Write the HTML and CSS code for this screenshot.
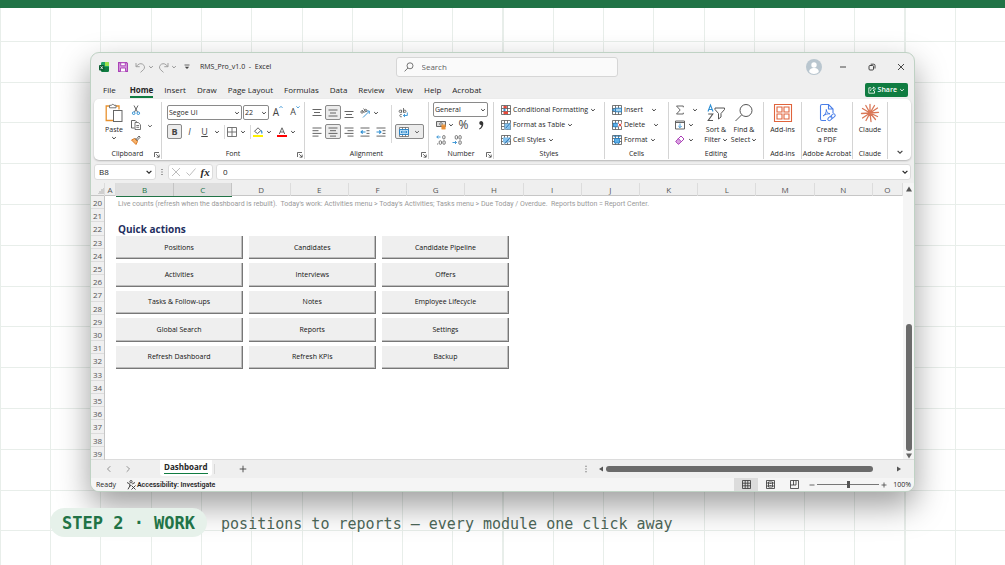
FILE: index.html
```html
<!DOCTYPE html>
<html lang="en">
<head>
    <meta charset="UTF-8">
    <meta name="viewport" content="width=device-width, initial-scale=1.0">
    <title>RMS Pro</title>
    <link rel="stylesheet" href="styles.css">
</head>
<body>
    <!-- shared icons -->
    <svg class="sprite" aria-hidden="true">
        <symbol id="chev" viewBox="0 0 6 6"><path d="M1.2 2.1 3 3.9 4.8 2.1" fill="none" stroke="currentColor" stroke-width="0.9"/></symbol>
        <symbol id="launch" viewBox="0 0 6 6"><path d="M.5 5V.5H5M2.2 2.2 5 5M5.2 2.6V5.2H2.6" fill="none" stroke="#444" stroke-width=".8"/></symbol>
        <symbol id="grid-base" viewBox="0 0 10 10"><path d="M.5.5h9v9h-9zM.5 3.5h9M.5 6.5h9M3.5.5v9M6.5.5v9" fill="#fff" stroke="#555" stroke-width=".8"/></symbol>
    </svg>

    <div class="top-strip"></div>

    <main class="window">
        <header class="titlebar">
            <svg class="i10" viewBox="0 0 10 10"><rect x="2" y="0" width="8" height="10" rx="1.4" fill="#21a366"/><path d="M6 0h2.6A1.4 1.4 0 0 1 10 1.4V4H6z" fill="#9be04b"/><path d="M2 5h8v3.6A1.4 1.4 0 0 1 8.600 10H3.400A1.400 1.400 0 0 1 2 8.600z" fill="#107c41"/><rect y="3" width="5.400" height="5.400" rx="1" fill="#0b5a30"/><path d="m1.600 4.300 2.200 2.800m0-2.800L1.600 7.100" stroke="#fff" stroke-width=".8"/></svg>
            <button class="tb save" aria-label="Save"><svg class="i10" viewBox="0 0 10 10"><path d="M.6.6h8l.8.8v8H.6z" fill="#d9a0e0" stroke="#a83db5" stroke-width="1.1"/><path d="M2.700.8h4.600v3H2.700zM2.500 9.400V6h5v3.400" fill="#fff" stroke="#a83db5" stroke-width=".9"/></svg></button>
            <button class="tb" aria-label="Undo"><svg class="i11" viewBox="0 0 11 11"><path d="M1 1v3.700h3.700M1.200 4.500C3 2 5.500 1 7.600 2.200c2.200 1.300 2.500 3.800 1 5.300L5.500 10.400" fill="none" stroke="#999" stroke-width=".9"/></svg><svg class="i6 dim"><use href="#chev"/></svg></button>
            <button class="tb" aria-label="Redo"><svg class="i11" viewBox="0 0 11 11"><path d="M10 1v3.700H6.300M9.800 4.500C8 2 5.500 1 3.400 2.200 1.200 3.500.9 6 2.400 7.500l3.100 2.900" fill="none" stroke="#999" stroke-width=".9"/></svg><svg class="i6 dim"><use href="#chev"/></svg></button>
            <button class="tb" aria-label="Customize"><svg class="i6" viewBox="0 0 6 6"><path d="M.5 1h5" stroke="#444" stroke-width=".8"/><path d="M.8 2.800h4.400L3 5z" fill="#444"/></svg></button>
            <span class="doc-name">RMS_Pro_v1.0&nbsp; -&nbsp; Excel</span>
            <label class="search">
                <svg class="i10" viewBox="0 0 10 10"><circle cx="6" cy="3.800" r="3" fill="none" stroke="#555" stroke-width=".8"/><path d="M3.900 6 .6 9.400" stroke="#555" stroke-width=".8"/></svg>
                <input type="text" placeholder="Search" aria-label="Search">
            </label>
            <div class="win-controls">
                <svg class="avatar" viewBox="0 0 16 16"><circle cx="8" cy="8" r="8" fill="#b9c6cf"/><circle cx="8" cy="6" r="2.700" fill="#fff"/><path d="M3.200 13c0-3 2-4 4.800-4s4.800 1 4.800 4c-2.500 2.500-7.100 2.500-9.600 0z" fill="#fff"/></svg>
                <button aria-label="Minimize"><svg class="i8" viewBox="0 0 8 8"><path d="M1 4h6" stroke="#333" stroke-width=".9"/></svg></button>
                <button aria-label="Restore"><svg class="i8" viewBox="0 0 8 8"><rect x="1" y="2.500" width="4.500" height="4.500" rx="1" fill="none" stroke="#333" stroke-width=".9"/><path d="M2.700 1.200h3a1.300 1.300 0 0 1 1.300 1.300v3" fill="none" stroke="#333" stroke-width=".9"/></svg></button>
                <button aria-label="Close"><svg class="i8" viewBox="0 0 8 8"><path d="m1 1 6 6m0-6L1 7" stroke="#333" stroke-width=".9"/></svg></button>
            </div>
        </header>

        <nav class="tabs">
            <a href="#">File</a>
            <a href="#" class="active">Home</a>
            <a href="#">Insert</a>
            <a href="#">Draw</a>
            <a href="#">Page Layout</a>
            <a href="#">Formulas</a>
            <a href="#">Data</a>
            <a href="#">Review</a>
            <a href="#">View</a>
            <a href="#">Help</a>
            <a href="#">Acrobat</a>
            <button class="share"><svg class="i8" viewBox="0 0 8 8"><path d="M3 1.800H.8v5.400h5.700V5M2.500 5c.2-2 1.300-2.700 3-2.700V.9l2 2-2 2V3.600" fill="none" stroke="#fff" stroke-width=".8"/></svg>Share<svg class="i6"><use href="#chev"/></svg></button>
        </nav>

        <section class="ribbon">
            <div class="group">
                <div class="body clipboard">
                    <button class="big"><svg class="i20" viewBox="0 0 20 20"><path d="M5.500 3H2.200v14.500H9M12 3h3v3.500" fill="none" stroke="#e8912d" stroke-width="1.300"/><path d="M5.500 4.800V2.300h2a1.300 1.300 0 0 1 2.500 0h2v2.500z" fill="#fff" stroke="#666" stroke-width=".9"/><rect x="9.500" y="7.500" width="8.500" height="11" fill="#fff" stroke="#666"/></svg>Paste<svg class="i6"><use href="#chev"/></svg></button>
                    <div class="stack">
                        <button class="tool" aria-label="Cut"><svg class="i10" viewBox="0 0 10 10"><path d="M3 .5 6.500 7M7 .5 3.500 7" stroke="#555" stroke-width=".9"/><circle cx="2.700" cy="8.200" r="1.300" fill="none" stroke="#2f8fd3"/><circle cx="7.300" cy="8.200" r="1.300" fill="none" stroke="#2f8fd3"/></svg></button>
                        <button class="tool" aria-label="Copy"><svg class="i10" viewBox="0 0 10 10"><path d="M3.500 8H.5V.5h3.700l1.500 1.500" fill="none" stroke="#555" stroke-width=".9"/><path d="M4 2.500h3.300l2.200 2.200v4.800H4zM5.300 5.500h2.800M5.300 7.300h2.800" fill="#fff" stroke="#555" stroke-width=".8"/></svg></button>
                        <button class="tool" aria-label="Format Painter"><svg class="i10" viewBox="0 0 10 10"><path d="m.5 5 3-1.500 3 3L5 9.500z" fill="#f6b26b" stroke="#d9731a" stroke-width=".9"/><path d="M4 3.200 6.800 6M5.500 4 8 1l1.200 1.200L6.500 5" fill="none" stroke="#555" stroke-width=".9"/></svg></button>
                    </div>
                    <button class="tool narrow" aria-label="Copy options"><svg class="i6"><use href="#chev"/></svg></button>
                </div>
                <h2>Clipboard</h2><svg class="launch"><use href="#launch"/></svg>
            </div>

            <div class="group">
                <div class="body font-body">
                    <div class="row tight">
                        <span class="pick font-name"><select aria-label="Font"><option>Segoe UI</option></select><svg class="i6"><use href="#chev"/></svg></span>
                        <span class="pick font-size"><select aria-label="Font size"><option>22</option></select><svg class="i6"><use href="#chev"/></svg></span>
                        <button class="tool grow" aria-label="Grow font">A<svg class="i4" viewBox="0 0 4 4"><path d="M.4 3 2 1.300 3.600 3" fill="none" stroke="#2f8fd3" stroke-width=".8"/></svg></button>
                        <button class="tool grow small" aria-label="Shrink font">A<svg class="i4" viewBox="0 0 4 4"><path d="M.4 1.300 2 3l1.600-1.700" fill="none" stroke="#2f8fd3" stroke-width=".8"/></svg></button>
                    </div>
                    <div class="row font-row">
                        <button class="tool on"><b>B</b></button>
                        <button class="tool"><i>I</i></button>
                        <button class="tool"><u>U</u></button>
                        <svg class="i6"><use href="#chev"/></svg>
                        <span class="bar"></span>
                        <button class="tool slim" aria-label="Borders"><svg class="i10" viewBox="0 0 10 10"><path d="M.5.5h9v9h-9zM.5 5h9M5 .5v9" fill="none" stroke="#666" stroke-width=".9"/></svg></button>
                        <svg class="i6"><use href="#chev"/></svg>
                        <span class="bar"></span>
                        <button class="tool slim" aria-label="Fill colour"><svg class="i10" viewBox="0 0 10 10"><path d="M1.500 4.300 5 .8l2.800 2.800-3.300 3z" fill="none" stroke="#555" stroke-width=".9"/><path d="M7.800 3.600c1.200.8 1.200 2 .8 2.800" fill="none" stroke="#2f8fd3" stroke-width="1.200"/><path d="M0 8h10v2H0z" fill="#fff200"/></svg></button>
                        <svg class="i6"><use href="#chev"/></svg>
                        <button class="tool slim" aria-label="Font colour"><svg class="i10" viewBox="0 0 10 10"><path d="M2.300 7 5 .8 7.700 7M3.200 5h3.600" fill="none" stroke="#555" stroke-width=".9"/><path d="M0 8h10v2H0z" fill="#f00"/></svg></button>
                        <svg class="i6"><use href="#chev"/></svg>
                    </div>
                </div>
                <h2>Font</h2><svg class="launch"><use href="#launch"/></svg>
            </div>

            <div class="group">
                <div class="body align-body">
                    <div class="align-rows">
                        <div class="row">
                            <button class="tool" aria-label="Top align"><svg class="i10" viewBox="0 0 10 10"><path d="M.5 1.500h9M2 4.500h6M.5 7.500h9" stroke="#555" stroke-width=".9"/></svg></button>
                            <button class="tool on" aria-label="Middle align"><svg class="i10" viewBox="0 0 10 10"><path d="M.5 2h9M2 5h6M.5 8h9" stroke="#555" stroke-width=".9"/></svg></button>
                            <button class="tool" aria-label="Bottom align"><svg class="i10" viewBox="0 0 10 10"><path d="M.5 3.500h9M2 6.500h6M.5 9.500h9" stroke="#555" stroke-width=".9"/></svg></button>
                            <button class="tool" aria-label="Orientation"><svg class="i10" viewBox="0 0 10 10"><path d="m3 9.500 6-6M6.500 3H9.300v2.800" fill="none" stroke="#2f8fd3" stroke-width=".9"/><circle cx="2" cy="4" r="1.200" fill="none" stroke="#555" stroke-width=".8"/><path d="m2 2 2.500 3M3.500.5l2.700 3.300" stroke="#555" stroke-width=".8"/><circle cx="5.700" cy="2.500" r="1.200" fill="none" stroke="#555" stroke-width=".8"/></svg></button>
                            <svg class="i6"><use href="#chev"/></svg>
                        </div>
                        <div class="row">
                            <button class="tool" aria-label="Align left"><svg class="i10" viewBox="0 0 10 10"><path d="M.5 1h9M.5 3.700h6M.5 6.400h9M.5 9.100h6" stroke="#555" stroke-width=".9"/></svg></button>
                            <button class="tool on" aria-label="Centre"><svg class="i10" viewBox="0 0 10 10"><path d="M.5 1h9M2 3.700h6M.5 6.400h9M2 9.100h6" stroke="#555" stroke-width=".9"/></svg></button>
                            <button class="tool" aria-label="Align right"><svg class="i10" viewBox="0 0 10 10"><path d="M.5 1h9M3.500 3.700h6M.5 6.400h9M3.500 9.100h6" stroke="#555" stroke-width=".9"/></svg></button>
                            <button class="tool" aria-label="Decrease indent"><svg class="i10" viewBox="0 0 10 10"><path d="M.5 1h9M6.500 3.700h3M6.500 6.400h3M.5 9.100h9" stroke="#555" stroke-width=".9"/><path d="M5.500 5H1m1.700-1.700L1 5l1.700 1.700" fill="none" stroke="#2f8fd3" stroke-width="1.100"/></svg></button>
                            <button class="tool" aria-label="Increase indent"><svg class="i10" viewBox="0 0 10 10"><path d="M.5 1h9M6.500 3.700h3M6.500 6.400h3M.5 9.100h9" stroke="#555" stroke-width=".9"/><path d="M.5 5H5M3.300 3.300 5 5 3.300 6.700" fill="none" stroke="#2f8fd3" stroke-width="1.100"/></svg></button>
                        </div>
                    </div>
                    <span class="bar tall"></span>
                    <div class="align-rows">
                        <div class="row"><button class="tool" aria-label="Wrap text"><svg class="i10" viewBox="0 0 10 10"><circle cx="2.300" cy="3.300" r="1.200" fill="none" stroke="#555" stroke-width=".8"/><path d="M3.600 1.800v3M5.500 0v4.800" stroke="#555" stroke-width=".8"/><circle cx="6.800" cy="3.300" r="1.200" fill="none" stroke="#555" stroke-width=".8"/><path d="M3.800 6.500a1.300 1.300 0 1 0 0 2.200" fill="none" stroke="#555" stroke-width=".8"/><path d="M9.300 4.500v3H5.500M7 6 5.400 7.500 7 9" fill="none" stroke="#2f8fd3" stroke-width=".9"/></svg></button></div>
                        <div class="row"><button class="tool on merge" aria-label="Merge and centre"><svg class="i10" viewBox="0 0 10 10"><path d="M.5.500h9v9h-9zM3.500.5v9M6.500.5v9" fill="#fff" stroke="#555" stroke-width=".7"/><path d="M.5 2.500h9v5h-9z" fill="#bfe0f7" stroke="#1f7ec4" stroke-width=".9"/><path d="M2 5h6M3.200 4 2 5l1.200 1M6.800 4 8 5 6.800 6" fill="none" stroke="#1f7ec4" stroke-width=".8"/></svg><svg class="i6"><use href="#chev"/></svg></button></div>
                    </div>
                </div>
                <h2>Alignment</h2><svg class="launch"><use href="#launch"/></svg>
            </div>

            <div class="group">
                <div class="body number-body">
                    <span class="pick"><select aria-label="Number format"><option>General</option></select><svg class="i6"><use href="#chev"/></svg></span>
                    <div class="row">
                        <button class="tool" aria-label="Accounting"><svg class="i10" viewBox="0 0 10 10"><path d="M.5 1.500h9v5h-9z" fill="#ddd" stroke="#555" stroke-width=".9"/><circle cx="5" cy="4" r="1.300" fill="#fff" stroke="#555" stroke-width=".8"/><path d="M5.500 4.500h4v5h-4z" fill="#f0a04b"/><path d="M5.500 6.300h4M5.500 8h4" stroke="#d9731a" stroke-width=".6"/></svg></button>
                        <svg class="i6"><use href="#chev"/></svg>
                        <button class="tool pct">%</button>
                        <button class="tool" aria-label="Comma style"><svg class="i10" viewBox="0 0 10 10"><path d="M5 1a2 2 0 1 0 .5 4C5.300 6.700 4.500 7.800 3 8.700l.5.8C6 8.300 7.300 6.300 7.300 3.500 7.300 2 6.300 1 5 1z" fill="#333"/></svg></button>
                    </div>
                    <div class="row">
                        <button class="tool" aria-label="Increase decimal"><svg class="i10" viewBox="0 0 10 10"><path d="M4.500 2H.8m1.400-1.500L.8 2l1.400 1.500" fill="none" stroke="#2f8fd3" stroke-width=".9"/><rect x="6.700" y=".6" width="2.300" height="3.300" rx="1" fill="none" stroke="#555" stroke-width=".8"/><rect x="3.200" y="5.800" width="2.300" height="3.500" rx="1" fill="none" stroke="#555" stroke-width=".8"/><rect x="6.900" y="5.800" width="2.300" height="3.500" rx="1" fill="none" stroke="#555" stroke-width=".8"/><path d="M1.200 8.500h.9v.9h-.9z" fill="#555"/></svg></button>
                        <button class="tool" aria-label="Decrease decimal"><svg class="i10" viewBox="0 0 10 10"><path d="M.5 7.500h4M3 6l1.500 1.500L3 9" fill="none" stroke="#2f8fd3" stroke-width=".9"/><rect x="3.200" y=".6" width="2.300" height="3.500" rx="1" fill="none" stroke="#555" stroke-width=".8"/><rect x="6.900" y=".6" width="2.300" height="3.500" rx="1" fill="none" stroke="#555" stroke-width=".8"/><rect x="6.900" y="5.800" width="2.300" height="3.500" rx="1" fill="none" stroke="#555" stroke-width=".8"/></svg></button>
                    </div>
                </div>
                <h2>Number</h2><svg class="launch"><use href="#launch"/></svg>
            </div>

            <div class="group">
                <div class="body list">
                    <button class="item"><svg class="i10" viewBox="0 0 10 10"><use href="#grid-base"/><path d="M2.500 1h3.300v2.300H2.500zM2.500 6.500h4.500V9H2.500z" fill="#e8483b"/><path d="M2.500 3.700h2v2.300h-2z" fill="#2f8fd3"/></svg>Conditional Formatting<svg class="i6"><use href="#chev"/></svg></button>
                    <button class="item"><svg class="i10" viewBox="0 0 10 10"><use href="#grid-base"/><path d="M3.500 3.500h6v6h-6z" fill="#7fc0ee"/><path d="m3.500 9.500.8-2L8.800 2.500l1 1-4.300 5z" fill="#2f7fc0" stroke="#fff" stroke-width=".4"/></svg>Format as Table<svg class="i6"><use href="#chev"/></svg></button>
                    <button class="item"><svg class="i10" viewBox="0 0 10 10"><use href="#grid-base"/><path d="M2 2.500h6.500v5H2z" fill="#7fc0ee"/><path d="m3 9.500.8-2.500L8.800 2l1 1-4.300 5z" fill="#2f7fc0" stroke="#fff" stroke-width=".4"/></svg>Cell Styles<svg class="i6"><use href="#chev"/></svg></button>
                </div>
                <h2>Styles</h2>
            </div>

            <div class="group">
                <div class="body list">
                    <button class="item spread"><svg class="i10" viewBox="0 0 10 10"><use href="#grid-base"/><path d="M3.500 3.200H9.500v3.600H3.500z" fill="#a5d4f3" stroke="#1f7ec4" stroke-width=".8"/><path d="M4 5H.6m1.500-1.500L.6 5l1.500 1.500" fill="none" stroke="#1f7ec4"/></svg>Insert<svg class="i6"><use href="#chev"/></svg></button>
                    <button class="item spread"><svg class="i10" viewBox="0 0 10 10"><use href="#grid-base"/><path d="M1.500 3.200H6v3.600H1.500z" fill="#5fb0e8" stroke="#1f7ec4" stroke-width=".8"/><path d="M5.800 2.800h4v4h-4z" fill="#fff"/><path d="m6.300 3.300 3.200 3.200m0-3.200L6.300 6.500" stroke="#e03a2f"/></svg>Delete<svg class="i6"><use href="#chev"/></svg></button>
                    <button class="item"><svg class="i10" viewBox="0 0 10 10"><use href="#grid-base"/><path d="M2.500 3.500h5v4.500h-5z" fill="#5fb0e8" stroke="#1f7ec4" stroke-width=".8"/><path d="M2 1.200h6M2 .3v1.800M8 .3v1.800" stroke="#1f7ec4" stroke-width=".8"/></svg>Format<svg class="i6"><use href="#chev"/></svg></button>
                </div>
                <h2>Cells</h2>
            </div>

            <div class="group">
                <div class="body editing">
                    <div class="stack left">
                        <button class="item sum" aria-label="AutoSum"><svg class="i10" viewBox="0 0 10 10"><path d="M8.300 2.300V1H1.500l3.700 4-3.700 4h6.800V7.700" fill="none" stroke="#555" stroke-width=".9"/></svg><svg class="i6"><use href="#chev"/></svg></button>
                        <button class="item" aria-label="Fill"><svg class="i10" viewBox="0 0 10 10"><path d="M.5 1h9v8h-9zM.5 2.500h9" fill="none" stroke="#555" stroke-width=".9"/><path d="M5 3.500v4M3.300 6 5 7.700 6.700 6" fill="none" stroke="#2f8fd3" stroke-width=".9"/></svg><svg class="i6"><use href="#chev"/></svg></button>
                        <button class="item" aria-label="Clear"><svg class="i10" viewBox="0 0 10 10"><path d="M1 6 6 1l3 3-5 5H3L1 7zM3.300 3.700l3 3" fill="#fff" stroke="#a83db5"/><path d="m1 6 2.300-2.300 3 3L4 9H3L1 7z" fill="#d9a0e0" stroke="#a83db5" stroke-width=".6"/></svg><svg class="i6"><use href="#chev"/></svg></button>
                    </div>
                    <button class="big"><svg class="i20" viewBox="0 0 20 20"><path d="M2 8.500 4.500 2 7 8.500M2.900 6.500h3.200" fill="none" stroke="#2f8fd3" stroke-width="1.100"/><path d="M2.200 11h4.600l-4.600 6.500H7" fill="none" stroke="#555" stroke-width="1.100"/><path d="M9 5h9.500v1.500L15 10.500V14l-2.500 2v-5.500L9 6.500z" fill="#fff" stroke="#555"/></svg>Sort &amp;<span>Filter<svg class="i6"><use href="#chev"/></svg></span></button>
                    <button class="big"><svg class="i20" viewBox="0 0 20 20"><circle cx="12" cy="7.500" r="6" fill="none" stroke="#555"/><path d="M7.500 12 1.500 18" stroke="#555"/></svg>Find &amp;<span>Select<svg class="i6"><use href="#chev"/></svg></span></button>
                </div>
                <h2>Editing</h2>
            </div>

            <div class="group">
                <div class="body centered">
                    <button class="big"><svg class="i20" viewBox="0 0 20 20"><path d="M1.500 1.500h17v17h-17z" fill="none" stroke="#e0643c" stroke-width="1.100"/><path d="M4 4h5v5H4zM11 4h5v5h-5zM4 11h5v5H4zM11 11h5v5h-5z" fill="#fff" stroke="#e0643c" stroke-width="1.100"/></svg>Add-ins</button>
                </div>
                <h2>Add-ins</h2>
            </div>

            <div class="group">
                <div class="body centered">
                    <button class="big"><svg class="i20" viewBox="0 0 20 20"><path d="M9 17.500H5A1.500 1.500 0 0 1 3.500 16V3A1.500 1.500 0 0 1 5 1.500h6.500L16 6v4M11.500 1.500V6H16" fill="none" stroke="#4a7fe8" stroke-width="1.100"/><path d="M6 13c2.500-1.500 3.500-4 3.300-6.500C9.500 9 11 10.500 13 10.800 10.500 10.500 8 11.500 6 13z" fill="none" stroke="#4a7fe8"/><rect x="10.500" y="14" width="5" height="3" rx="1.500" transform="rotate(-45 13 15.500)" fill="#fff" stroke="#4a7fe8"/><rect x="13.500" y="11.500" width="5" height="3" rx="1.500" transform="rotate(-45 16 13)" fill="none" stroke="#4a7fe8"/></svg>Create<span>a PDF</span></button>
                </div>
                <h2>Adobe Acrobat</h2>
            </div>

            <div class="group">
                <div class="body centered">
                    <button class="big"><svg class="i20" viewBox="0 0 20 20"><path d="M10 10V1.500M10 10l4.500-7.500M10 10l7.500-5M10 10l8.500-.7M10 10l7.500 3.500M10 10l5.500 6.500M10 10l1 8.500M10 10l-4 7.500M10 10l-7.500 5M10 10l-8.500.5M10 10 2.500 5.500M10 10 5.800 2.500" stroke="#d97757" stroke-width="1.300" stroke-linecap="round"/></svg>Claude</button>
                </div>
                <h2>Claude</h2>
            </div>

            <div class="group last">
                <button class="tool collapse" aria-label="Collapse ribbon"><svg class="i8"><use href="#chev"/></svg></button>
            </div>
        </section>

        <div class="formula-bar">
            <span class="box name-box"><input type="text" value="B8" aria-label="Name box"><svg class="i8"><use href="#chev"/></svg></span>
            <svg class="i8" viewBox="0 0 8 8"><path d="M3.500 1h1v1h-1zM3.500 3.500h1v1h-1zM3.500 6h1v1h-1z" fill="#444"/></svg>
            <span class="box fx-box">
                <svg class="i10" viewBox="0 0 10 10"><path d="m1 1 8 8m0-8L1 9" stroke="#b5b5b5" stroke-width=".9"/></svg>
                <svg class="i10" viewBox="0 0 10 10"><path d="m.5 5.500 3 3 6-7" fill="none" stroke="#b5b5b5" stroke-width=".9"/></svg>
                <em>fx</em>
            </span>
            <span class="box value-box"><input type="text" value="0" aria-label="Formula"><svg class="i8"><use href="#chev"/></svg></span>
        </div>

        <div class="sheet">
            <div class="sheet-main">
                <div class="cols">
                    <span class="corner"></span><span>A</span><span class="sel">B</span><span class="sel">C</span><span>D</span><span>E</span><span>F</span><span>G</span><span>H</span><span>I</span><span>J</span><span>K</span><span>L</span><span>M</span><span>N</span><span>O</span>
                </div>
                <div class="cells">
                    <div class="rows">
                        <span>20</span><span>21</span><span>22</span><span>23</span><span>24</span><span>25</span><span>26</span><span>27</span><span>28</span><span>29</span><span>30</span><span>31</span><span>32</span><span>33</span><span>34</span><span>35</span><span>36</span><span>37</span><span>38</span><span>39</span>
                    </div>
                    <div class="dashboard">
                        <p class="note">Live counts (refresh when the dashboard is rebuilt).&nbsp; Today's work: Activities menu &gt; Today's Activities; Tasks menu &gt; Due Today / Overdue.&nbsp; Reports button = Report Center.</p>
                        <h1>Quick actions</h1>
                        <div class="actions">
                            <button>Positions</button>
                            <button>Candidates</button>
                            <button>Candidate Pipeline</button>
                            <button>Activities</button>
                            <button>Interviews</button>
                            <button>Offers</button>
                            <button>Tasks &amp; Follow-ups</button>
                            <button>Notes</button>
                            <button>Employee Lifecycle</button>
                            <button>Global Search</button>
                            <button>Reports</button>
                            <button>Settings</button>
                            <button>Refresh Dashboard</button>
                            <button>Refresh KPIs</button>
                            <button>Backup</button>
                        </div>
                    </div>
                </div>
            </div>
            <div class="vscroll">
                <svg class="i6" viewBox="0 0 6 6"><path d="M0 5.500 3 .5l3 5z" fill="#555"/></svg>
                <div class="vtrack"><div class="vthumb"></div></div>
                <svg class="i6" viewBox="0 0 6 6"><path d="M0 .5 3 5.500l3-5z" fill="#666"/></svg>
            </div>
        </div>

        <div class="sheet-tabs">
            <div class="sheet-nav">
                <button aria-label="Previous sheet"><svg class="i8" viewBox="0 0 8 8"><path d="M5.300 1.200 2.500 4l2.800 2.800" fill="none" stroke="#888" stroke-width=".9"/></svg></button>
                <button aria-label="Next sheet"><svg class="i8" viewBox="0 0 8 8"><path d="M2.700 1.200 5.500 4 2.700 6.800" fill="none" stroke="#888" stroke-width=".9"/></svg></button>
            </div>
            <a href="#" class="sheet-tab"><span>Dashboard</span></a>
            <span class="bar"></span>
            <button class="add" aria-label="New sheet"><svg class="i8" viewBox="0 0 8 8"><path d="M4 .7v6.600M.7 4h6.600" stroke="#444" stroke-width=".9"/></svg></button>
            <div class="hscroll">
                <svg class="i8" viewBox="0 0 8 8"><path d="M3.500.8h1v1h-1zM3.500 3.500h1v1h-1zM3.500 6.200h1v1h-1z" fill="#444"/></svg>
                <svg class="i6 arrow" viewBox="0 0 6 6"><path d="M5 .5 1 3l4 2.500z" fill="#555"/></svg>
                <div class="htrack"><div class="hthumb"></div></div>
                <svg class="i6" viewBox="0 0 6 6"><path d="m1 .5 4 2.500-4 2.500z" fill="#555"/></svg>
            </div>
        </div>

        <footer class="status">
            <span>Ready</span>
            <span class="access"><svg class="i10" viewBox="0 0 10 10"><circle cx="5" cy="1.700" r="1.200" fill="none" stroke="#333" stroke-width=".8"/><path d="M1 2.500 3.800 4v2L2 9.300M9 2.500 6.200 4M3.800 6 5 5.500M5.500 5.500l4 4m0-4-4 4" fill="none" stroke="#333" stroke-width=".9"/></svg>Accessibility: Investigate</span>
            <div class="views">
                <button class="current" aria-label="Normal"><svg class="i9" viewBox="0 0 9 9"><path d="M.5.5h8v8h-8zM.5 3.200h8M.5 5.800h8M3.200.5v8M5.800.5v8" fill="none" stroke="#333" stroke-width=".8"/></svg></button>
                <button aria-label="Page layout"><svg class="i9" viewBox="0 0 9 9"><path d="M.5.5h8v8h-8zM2.500 2h4v5h-4zM.5 3h2M.5 6h2M6.500 3h2M6.500 6h2M3.300 3.500h2.400M3.300 5.500h2.400" fill="none" stroke="#333" stroke-width=".8"/></svg></button>
                <button aria-label="Page break"><svg class="i9" viewBox="0 0 9 9"><path d="M.5.500h8v8h-8zM3.500.5V5M.5 5h5.500V.5" fill="none" stroke="#333" stroke-width=".8"/></svg></button>
            </div>
            <div class="zoom">
                <svg class="i6" viewBox="0 0 6 6"><path d="M.5 3h5" stroke="#444" stroke-width=".8"/></svg>
                <input type="range" min="0" max="100" value="50" aria-label="Zoom">
                <svg class="i6" viewBox="0 0 6 6"><path d="M.5 3h5M3 .5v5" stroke="#444" stroke-width=".8"/></svg>
                <span>100%</span>
            </div>
        </footer>
    </main>

    <div class="caption">
        <strong>STEP 2 · WORK</strong>
        <span>positions to reports — every module one click away</span>
    </div>
</body>
</html>
```
FILE: styles.css
```css
* {
    box-sizing: border-box;
}
body {
    margin: 0;
    min-height: 100vh;
    overflow: hidden;
    font-family: "Open Sans", "Noto Sans", sans-serif;
    font-size: 7px;
    line-height: 10px;
    color: #262626;
    background-color: #fff;
    background-image:
        repeating-linear-gradient(to right, #e8eeea 0 1px, transparent 1px 5%),
        repeating-linear-gradient(to bottom, #e8eeea 0 1px, transparent 1px 7.22%);
}
button, input, select {
    font: inherit;
    color: inherit;
    margin: 0;
    padding: 0;
    border: none;
    background: none;
}
a {
    color: inherit;
    text-decoration: none;
}
h1, h2, p {
    margin: 0;
}
svg {
    display: block;
    flex: none;
}
.sprite {
    position: absolute;
    width: 0;
    height: 0;
}
.i4 { width: 4px; height: 4px; }
.i6 { width: 6px; height: 6px; }
.i8 { width: 8px; height: 8px; }
.i9 { width: 9px; height: 9px; }
.i10 { width: 10px; height: 10px; }
.i11 { width: 11px; height: 11px; }
.i20 { width: 20px; height: 20px; }
.dim {
    color: #888;
}
.top-strip {
    height: 8px;
    background: #217346;
}

/* window */
.window {
    margin: 44px 90px 0;
    border: 1px solid #bfd2c4;
    border-radius: 9px;
    overflow: hidden;
    background: #efefef;
    box-shadow: 0 14px 32px rgba(0, 0, 0, 0.38);
}
.titlebar {
    position: relative;
    display: flex;
    align-items: center;
    height: 28px;
    padding: 0 4px 0 8px;
}
.tb {
    display: flex;
    align-items: center;
    gap: 2px;
    margin-left: 4px;
}
.tb.save {
    margin: 0 3px 0 9px;
}
.tb:nth-of-type(4) {
    margin-left: 7px;
}
.doc-name {
    margin-left: 10px;
}
.search {
    position: absolute;
    left: 37%;
    width: 27%;
    top: 4px;
    height: 20px;
    display: flex;
    align-items: center;
    gap: 8px;
    padding-left: 7px;
    background: #fafafa;
    border: 1px solid #d6d6d6;
    border-radius: 3px;
}
.search input {
    flex: 1;
    outline: none;
    font-size: 8px;
}
.search input::placeholder {
    color: #616161;
}
.win-controls {
    display: flex;
    align-items: center;
    gap: 21px;
    margin-left: auto;
    padding-right: 5px;
}
.avatar {
    width: 16px;
    height: 16px;
    margin-right: -4px;
}

/* tabs */
.tabs {
    display: flex;
    align-items: center;
    gap: 11px;
    height: 18px;
    padding: 0 6px 0 12px;
    font-size: 8px;
}
.tabs a {
    line-height: 13px;
    border-bottom: 2px solid transparent;
}
.tabs a.active {
    font-weight: 700;
    border-bottom-color: #107c41;
    margin-left: 3px;
}
.share {
    display: flex;
    align-items: center;
    gap: 2px;
    height: 14px;
    margin-left: auto;
    padding: 0 3px;
    font-size: 7px;
    font-weight: 600;
    color: #fff;
    background: #107c41;
    border-radius: 2px;
}

/* ribbon */
.ribbon {
    display: grid;
    grid-template-columns: 68fr 143fr 124fr 65fr 111fr 64fr 95fr 38fr 51fr 35fr 23fr;
    height: 61px;
    margin: 0 3px;
    padding: 3px 0 2px;
    background: #fff;
    border-radius: 5px;
    box-shadow: 0 1px 2px rgba(0, 0, 0, 0.25);
}
.group {
    position: relative;
    display: flex;
    flex-direction: column;
    min-width: 0;
    border-right: 1px solid #d4d4d4;
}
.group.last {
    border-right: none;
    justify-content: flex-end;
    align-items: center;
}
.group h2 {
    font-size: 7px;
    font-weight: 400;
    text-align: center;
    white-space: nowrap;
    margin: 0 -4px;
}
.launch {
    position: absolute;
    right: 1px;
    bottom: 1px;
    width: 6px;
    height: 6px;
}
.body {
    height: 47px;
    display: flex;
}
.row {
    display: flex;
    align-items: center;
}
.stack {
    display: flex;
    flex-direction: column;
}
.tool {
    width: 16px;
    height: 15px;
    display: flex;
    align-items: center;
    justify-content: center;
    font-size: 9px;
    color: #444;
}
.tool.on {
    background: #ececec;
    border: 1px solid #8a8a8a;
    border-radius: 2px;
}
.tool.narrow {
    width: 12px;
    align-self: center;
}
.bar {
    width: 1px;
    height: 14px;
    margin: 0 2px;
    background: #d8d8d8;
}
.big {
    display: flex;
    flex-direction: column;
    align-items: center;
    width: 28px;
    white-space: nowrap;
}
.big span {
    display: flex;
    align-items: center;
    gap: 1px;
}
.big > svg:first-child {
    margin: 1px 0 2px;
}
.clipboard {
    padding-left: 6px;
}
.font-body {
    flex-direction: column;
    gap: 4px;
    padding: 3px 0 0 5px;
}
.font-row .tool {
    width: 15px;
}
.font-row .tool.slim {
    width: 12px;
}
.font-row > svg {
    margin: 0 4px 0 2px;
}
.font-row .bar {
    margin: 0 1px 0 0;
}
.tight {
    gap: 1px;
}
.pick {
    display: flex;
    align-items: center;
    height: 15px;
    padding-right: 1px;
    border: 1px solid #8a8a8a;
    border-radius: 2px;
}
.pick select {
    flex: 1;
    min-width: 0;
    appearance: none;
    padding-left: 1px;
    outline: none;
}
.font-name {
    width: 75px;
}
.font-size {
    width: 26px;
}
.grow {
    font-size: 10px;
    align-items: flex-start;
    line-height: 14px;
}
.grow.small {
    font-size: 9px;
}
.align-body {
    padding: 3px 0 0 4px;
}
.align-rows {
    display: flex;
    flex-direction: column;
    gap: 4px;
}
.align-body .bar.tall {
    height: 38px;
    margin: 0 3px 0 2px;
}
.merge {
    width: 29px;
    gap: 5px;
}
.number-body {
    flex-direction: column;
    padding: 0 5px 0 4px;
}
.pct {
    font-size: 12px;
    margin: 0 2px;
}
.list {
    flex-direction: column;
    padding-left: 7px;
}
.item {
    display: flex;
    align-items: center;
    gap: 2px;
    height: 15px;
    white-space: nowrap;
}
.item.spread svg:last-child {
    margin-left: 6px;
}
.editing {
    padding-left: 6px;
}
.editing .left {
    width: 27px;
}
.editing .item {
    gap: 3px;
}
.editing .sum {
    gap: 7px;
}
.centered {
    justify-content: center;
}

/* formula bar */
.formula-bar {
    display: flex;
    align-items: center;
    gap: 3px;
    padding: 4px 3px 3px;
}
.box {
    display: flex;
    align-items: center;
    height: 16px;
    background: #fff;
    border: 1px solid #dcdcdc;
    border-radius: 3px;
}
.box input {
    flex: 1;
    min-width: 0;
    font-size: 8px;
    outline: none;
}
.name-box {
    width: 62px;
    padding: 0 2px 0 4px;
}
.fx-box {
    width: 45px;
    justify-content: space-around;
}
.formula-bar > svg {
    margin: 0 -1px;
}
.fx-box em {
    font-family: "Liberation Serif", serif;
    font-size: 11px;
    font-weight: bold;
}
.value-box {
    flex: 1;
    padding: 0 1px 0 6px;
}

/* sheet */
.sheet {
    display: flex;
}
.sheet-main {
    flex: 1;
    min-width: 0;
}
.cols {
    display: grid;
    grid-template-columns: 14px 11fr repeat(13, 58fr) 30fr;
    height: 13px;
    border-bottom: 1px solid #c6c6c6;
    font-size: 8px;
    line-height: 13px;
    text-align: center;
    color: #555;
}
.cols span {
    min-width: 0;
    border-right: 1px solid #dcdcdc;
}
.cols .corner {
    background: linear-gradient(135deg, transparent 50%, #cfcfcf 50%) no-repeat 6px 4px / 7px 7px;
}
.cols .sel {
    color: #217346;
    background: #dedede;
    border-right-color: #c4c4c4;
    box-shadow: 0 1px #217346;
}
.cells {
    display: grid;
    grid-template-columns: 14px 1fr;
    height: 263px;
    background: #fff;
}
.rows {
    display: grid;
    grid-template-rows: repeat(20, minmax(0, 1fr));
    height: 264px;
    background: #f0f0f0;
    border-right: 1px solid #c6c6c6;
    font-size: 8px;
    text-align: center;
    color: #555;
}
.rows span {
    line-height: 13px;
    border-bottom: 1px solid #dcdcdc;
}
.dashboard {
    padding: 3px 0 0 11px;
}
.note {
    padding-left: 2px;
    font-family: Roboto, sans-serif;
    color: #999;
    white-space: nowrap;
}
h1 {
    padding-left: 2px;
    margin-top: 13px;
    font-size: 10px;
    font-weight: 700;
    line-height: 14px;
    color: #1f2f60;
}
.actions {
    display: grid;
    grid-template-columns: repeat(3, 1fr);
    grid-template-rows: repeat(5, 1fr);
    gap: 4px 6px;
    width: 50%;
    height: 133px;
}
.actions button {
    padding-top: 1px;
    background: #efefef;
    border-right: 1px solid #777;
    border-bottom: 1px solid #777;
    box-shadow: inset -1px -1px #bdbdbd;
    color: #111;
}
.vscroll {
    display: flex;
    flex-direction: column;
    align-items: center;
    width: 11px;
    padding: 3px 0 0;
    background: #f5f5f5;
}
.vtrack {
    flex: 1;
    display: flex;
    align-items: flex-end;
    padding-bottom: 2px;
}
.vthumb {
    width: 6px;
    height: 49%;
    border-radius: 3px;
    background: #6b6b6b;
}

/* sheet tabs */
.sheet-tabs {
    display: flex;
    height: 19px;
    border-top: 1px solid #dcdcdc;
}
.sheet-nav {
    display: flex;
    align-items: center;
    gap: 11px;
    width: 69px;
    padding-left: 14px;
}
.sheet-tab {
    height: 16px;
    padding: 1px 4px 0;
    font-size: 8px;
    font-weight: 700;
    background: #fff;
    border-radius: 0 0 3px 3px;
}
.sheet-tab span {
    display: block;
    line-height: 12px;
    border-bottom: 1px solid #107c41;
}
.sheet-tabs .bar {
    height: 10px;
    margin-top: 4px;
}
.add {
    margin-left: 22px;
}
.hscroll {
    display: flex;
    align-items: center;
    width: 41%;
    margin-left: auto;
    padding: 0 12px 0 5px;
}
.hscroll .arrow {
    margin-left: 8px;
}
.htrack {
    flex: 1;
    padding-left: 2px;
}
.hthumb {
    width: 92%;
    height: 6px;
    border-radius: 3px;
    background: #6b6b6b;
}

/* status bar */
.status {
    display: flex;
    align-items: center;
    height: 13px;
    padding: 0 3px 0 5px;
    background: #f5f5f5;
}
.access {
    display: flex;
    align-items: center;
    gap: 1px;
    margin-left: 10px;
    font-family: Roboto, sans-serif;
    font-weight: 600;
}
.views {
    display: flex;
    margin-left: auto;
}
.views button {
    display: flex;
    justify-content: center;
    align-items: center;
    width: 24px;
    height: 13px;
}
.views .current {
    background: #dcdcdc;
}
.zoom {
    display: flex;
    align-items: center;
    gap: 2px;
    margin-left: 3px;
}
.zoom span {
    margin-left: 4px;
}
.zoom input {
    appearance: none;
    width: 62px;
    height: 7px;
    background: linear-gradient(#777, #777) no-repeat center / 100% 1px;
}
.zoom input::-webkit-slider-thumb {
    appearance: none;
    width: 3px;
    height: 7px;
    background: #555;
}

/* caption under the window */
.caption {
    position: relative;
    display: flex;
    align-items: baseline;
    gap: 14px;
    margin: 16px 50px 0;
    font-family: "DejaVu Sans Mono", monospace;
    font-size: 15px;
    line-height: 27px;
    color: #4a6355;
}
.caption strong {
    padding: 2px 12px 0;
    font-size: 17px;
    color: #217346;
    background: #e6f1ea;
    border-radius: 15px;
}
```
